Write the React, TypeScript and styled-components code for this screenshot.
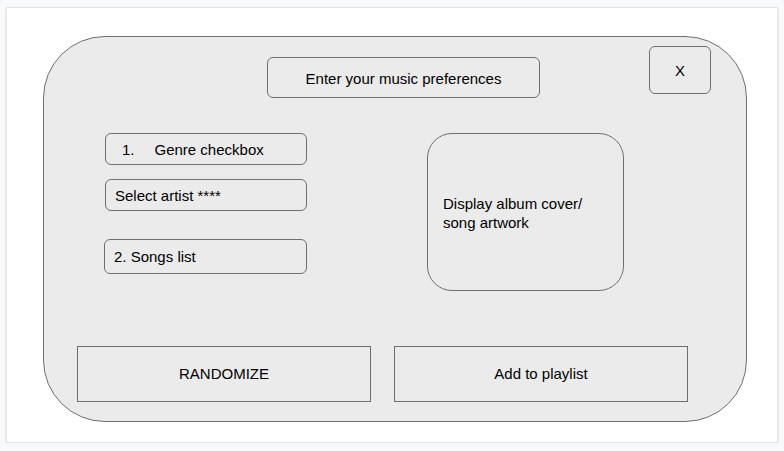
import React from "react";
import styled, { createGlobalStyle } from "styled-components";

const Global = createGlobalStyle`
  html, body { margin: 0; padding: 0; background: #f8f9fa; }
  body { font-family: "Liberation Sans", Arial, sans-serif; color: #000; }
`;

const Canvas = styled.div`
  box-sizing: border-box;
  margin: 7px 0 0 6px;
  width: 772px;
  height: 436px;
  background: #fff;
  border: 1px solid #e2e3e5;
  box-shadow: 0 1px 2px rgba(0, 0, 0, 0.12);
  padding: 28px 0 0 36px;
`;

const Panel = styled.div`
  box-sizing: border-box;
  width: 704px;
  height: 386px;
  background: #ebebeb;
  border: 1px solid #6f6f6f;
  border-radius: 62px;
  padding: 9px 35px 19px 33px;
  display: flex;
  flex-direction: column;
`;

const Header = styled.div`
  display: flex;
  align-items: flex-start;
`;

const Box = styled.div<{ $w: number; $h: number; $r?: number }>`
  box-sizing: border-box;
  width: ${(p) => p.$w}px;
  height: ${(p) => p.$h}px;
  border: 1px solid #6f6f6f;
  border-radius: ${(p) => p.$r ?? 6}px;
  font-size: 15px;
  display: flex;
  align-items: center;
`;

const TitleBox = styled(Box)`
  margin: 11px 0 0 190px;
  justify-content: center;
  padding-top: 1px;
`;

const CloseBox = styled(Box)`
  margin-left: auto;
  justify-content: center;
  font-size: 15px;
`;

const Middle = styled.div`
  display: flex;
  align-items: flex-start;
  margin-top: 35px;
`;

const LeftCol = styled.div`
  display: flex;
  flex-direction: column;
  margin-left: 28px;
`;

const Field = styled(Box)<{ $gap?: number; $shift?: number }>`
  margin-top: ${(p) => p.$gap ?? 0}px;
  margin-left: ${(p) => p.$shift ?? 0}px;
  padding-left: 9px;
`;

const Num = styled.span`
  margin-left: 7px;
  margin-right: 20px;
`;

const Artwork = styled(Box)`
  margin-left: 120px;
  padding: 2px 0 0 15px;
  line-height: 19px;
`;

const Actions = styled.div`
  margin-top: auto;
  display: flex;
  gap: 23px;
`;

const ActionButton = styled.div`
  box-sizing: border-box;
  width: 294px;
  height: 56px;
  border: 1px solid #6f6f6f;
  display: flex;
  align-items: center;
  justify-content: center;
  font-size: 15px;
  padding-bottom: 1px;
`;

export default function App() {
  return (
    <>
      <Global />
      <Canvas>
        <Panel>
          <Header>
            <TitleBox $w={273} $h={41}>Enter your music preferences</TitleBox>
            <CloseBox $w={62} $h={48}>X</CloseBox>
          </Header>
          <Middle>
            <LeftCol>
              <Field $w={202} $h={32}>
                <Num>1.</Num>Genre checkbox
              </Field>
              <Field $w={202} $h={32} $gap={14}>
                Select artist ****
              </Field>
              <Field $w={203} $h={35} $gap={28} $shift={-1}>
                2. Songs list
              </Field>
            </LeftCol>
            <Artwork $w={197} $h={158} $r={25}>
              <div>
                Display album cover/
                <br />
                song artwork
              </div>
            </Artwork>
          </Middle>
          <Actions>
            <ActionButton>RANDOMIZE</ActionButton>
            <ActionButton>Add to playlist</ActionButton>
          </Actions>
        </Panel>
      </Canvas>
    </>
  );
}
